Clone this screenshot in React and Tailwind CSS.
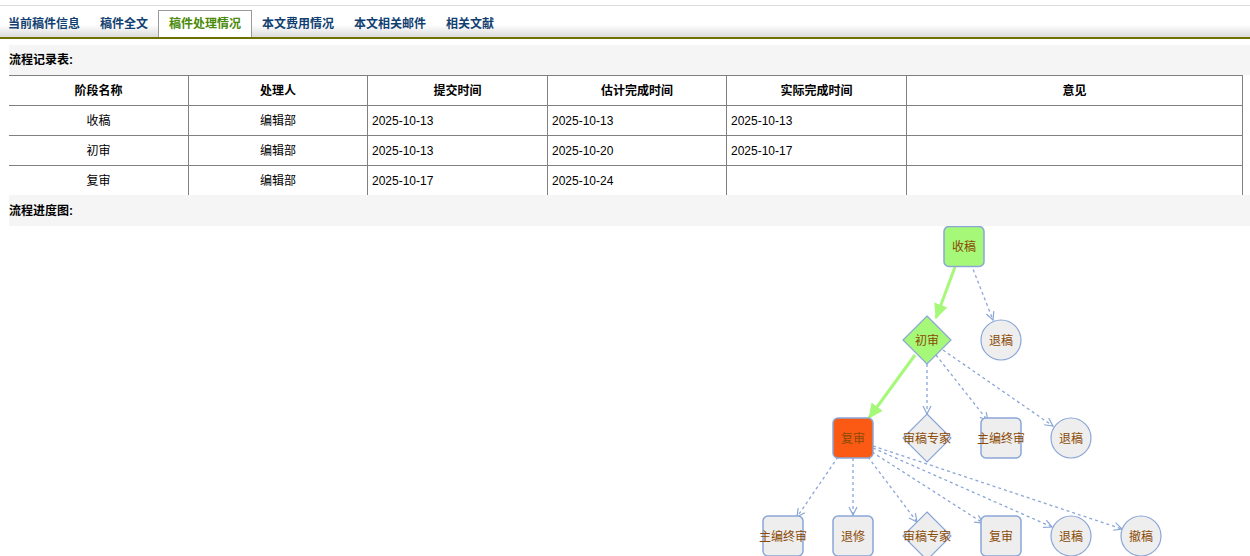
import React from "react";

const FONT = { fontFamily: '"Liberation Sans", "Noto Sans CJK SC", sans-serif' };

const tabs = ["当前稿件信息", "稿件全文", "稿件处理情况", "本文费用情况", "本文相关邮件", "相关文献"];

const rows = [
  ["收稿", "编辑部", "2025-10-13", "2025-10-13", "2025-10-13", ""],
  ["初审", "编辑部", "2025-10-13", "2025-10-20", "2025-10-17", ""],
  ["复审", "编辑部", "2025-10-17", "2025-10-24", "", ""],
];

const heads = ["阶段名称", "处理人", "提交时间", "估计完成时间", "实际完成时间", "意见"];

const STROKE = "#8aa6d6";
const TEXT = "#8a4a05";

function RectNode({ x, y, label, fill = "#eeeeee" }) {
  return (
    <g>
      <rect x={x} y={y} width="40" height="40" rx="5" fill={fill} stroke={STROKE} strokeWidth="1.5" />
      <text x={x + 20} y={y + 24.5} textAnchor="middle" fontSize="12" fill={TEXT}>{label}</text>
    </g>
  );
}

function Diamond({ cx, cy, label, fill = "#eeeeee" }) {
  return (
    <g>
      <polygon points={`${cx},${cy - 24} ${cx + 24},${cy} ${cx},${cy + 24} ${cx - 24},${cy}`} fill={fill} stroke={STROKE} strokeWidth="1.2" />
      <text x={cx} y={cy + 4.5} textAnchor="middle" fontSize="12" fill={TEXT}>{label}</text>
    </g>
  );
}

function Circle({ cx, cy, label }) {
  return (
    <g>
      <circle cx={cx} cy={cy} r="20" fill="#eeeeee" stroke={STROKE} strokeWidth="1.2" />
      <text x={cx} y={cy + 4.5} textAnchor="middle" fontSize="12" fill={TEXT}>{label}</text>
    </g>
  );
}

function Dash({ x1, y1, x2, y2 }) {
  return (
    <line x1={x1} y1={y1} x2={x2} y2={y2} stroke={STROKE} strokeWidth="1.3" strokeDasharray="3 3" markerEnd="url(#openArrow)" />
  );
}

function Flow() {
  return (
    <svg width="1250" height="330" viewBox="0 226 1250 330" className="block" style={FONT}>
      <defs>
        <marker id="openArrow" markerUnits="userSpaceOnUse" markerWidth="12" markerHeight="12" refX="9" refY="5" orient="auto" viewBox="0 0 12 10">
          <path d="M1,1 L9,5 L1,9" fill="none" stroke={STROKE} strokeWidth="1.2" />
        </marker>
        <marker id="greenArrow" markerUnits="userSpaceOnUse" markerWidth="16" markerHeight="14" refX="14" refY="7" orient="auto" viewBox="0 0 16 14">
          <path d="M0,0 L15,7 L0,14 Z" fill="#a6f878" />
        </marker>
      </defs>

      <line x1="955" y1="267" x2="936" y2="318" stroke="#a6f878" strokeWidth="3" markerEnd="url(#greenArrow)" />
      <line x1="915" y1="355" x2="869" y2="418" stroke="#a6f878" strokeWidth="3" markerEnd="url(#greenArrow)" />

      <Dash x1={971} y1={264} x2={993} y2={320} />
      <Dash x1={927} y1={364} x2={927} y2={414} />
      <Dash x1={936} y1={355} x2={988} y2={421} />
      <Dash x1={943} y1={350} x2={1053} y2={426} />

      <Dash x1={838} y1={457} x2={797} y2={517} />
      <Dash x1={853} y1={458} x2={853} y2={515} />
      <Dash x1={868} y1={457} x2={917} y2={522} />
      <Dash x1={872} y1={452} x2={983} y2={523} />
      <Dash x1={873} y1={448} x2={1052} y2={527} />
      <Dash x1={873} y1={446} x2={1122} y2={529} />

      <RectNode x={944} y={226.5} label="收稿" fill="#a6f878" />
      <Diamond cx={927} cy={340} label="初审" fill="#a6f878" />
      <Circle cx={1001} cy={340} label="退稿" />

      <RectNode x={833} y={418} label="复审" fill="#fa5a14" />
      <Diamond cx={927} cy={438} label="审稿专家" />
      <RectNode x={981} y={418} label="主编终审" />
      <Circle cx={1071} cy={438} label="退稿" />

      <RectNode x={763} y={516} label="主编终审" />
      <RectNode x={833} y={516} label="退修" />
      <Diamond cx={927} cy={536} label="审稿专家" />
      <RectNode x={981} y={516} label="复审" />
      <Circle cx={1071} cy={536} label="退稿" />
      <Circle cx={1141} cy={536} label="撤稿" />
    </svg>
  );
}

export default function App() {
  const cols = "grid grid-cols-[180px_179px_180px_179px_180px_336px]";
  return (
    <div className="w-[1250px] h-[556px] overflow-hidden bg-white text-[12px] text-black" style={FONT}>
      <div className="pt-[5px]">
        <div className="h-[34px] border-t border-[#dedede] border-b-2 border-b-[#6e7000] bg-gradient-to-b from-white from-60% to-[#dcdcdc] flex items-end">
          {tabs.map((t, i) => {
            const active = i === 2;
            return (
              <div
                key={t}
                className={
                  "h-[27px] flex items-center font-bold " +
                  (i === 0 ? "pl-[8px] pr-[10px] " : "px-[10px] ") +
                  (active
                    ? "bg-white border border-[#9a9a9a] border-b-0 text-[#4a8a0a]"
                    : "text-[#123f72]")
                }
              >
                {t}
              </div>
            );
          })}
        </div>
      </div>

      <div className="pl-[9px] pt-[6px]">
        <div className="h-[30px] bg-[#f5f5f5] flex items-center font-bold">流程记录表:</div>
        <div className="w-[1234px]">
          <div className={cols + " border-t border-[#808080] h-[30px] font-bold"}>
            {heads.map((h) => (
              <div key={h} className="border-r border-[#808080] flex items-center justify-center">{h}</div>
            ))}
          </div>
          {rows.map((r, ri) => (
            <div key={ri} className={cols + " border-t border-[#808080] h-[30px]"}>
              {r.map((c, ci) => (
                <div
                  key={ci}
                  className={
                    "border-r border-[#808080] flex items-center " +
                    (ci < 2 ? "justify-center" : "pl-[4px]")
                  }
                >
                  {c}
                </div>
              ))}
            </div>
          ))}
        </div>
        <div className="h-[31px] bg-[#f5f5f5] flex items-center font-bold">流程进度图:</div>
      </div>
      <Flow />
    </div>
  );
}
